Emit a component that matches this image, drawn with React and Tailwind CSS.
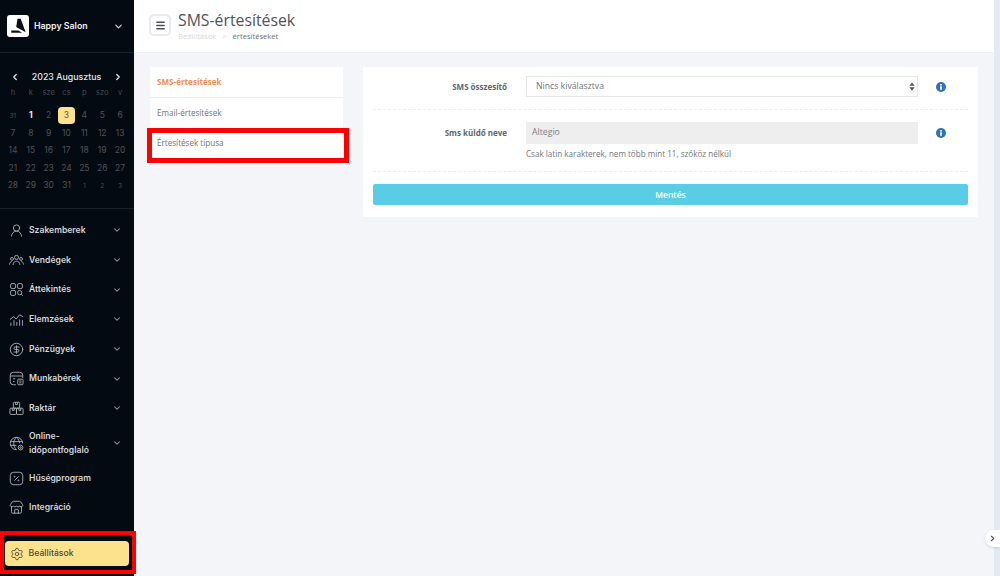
import { ChevronDown, ChevronLeft, ChevronRight, UserRound, CircleDollarSign, Store, Settings, Menu } from "lucide-react";

const Clients = (props) => (
  <svg viewBox="0 0 24 24" fill="none" stroke="currentColor" strokeWidth="1.4" {...props}>
    <circle cx="12" cy="7" r="3.2" />
    <path d="M6.5 19c.4-4 2.6-6 5.5-6s5.100 2 5.500 6" />
    <circle cx="4.800" cy="9.500" r="2.300" />
    <path d="M.8 18.500c.3-3 1.500-4.500 3.700-4.800" />
    <circle cx="19.200" cy="9.500" r="2.300" />
    <path d="M23.200 18.500c-.3-3-1.500-4.500-3.700-4.800" />
  </svg>
);

const Overview = (props) => (
  <svg viewBox="0 0 24 24" fill="none" stroke="currentColor" strokeWidth="1.5" {...props}>
    <rect x="2.500" y="2.500" width="8" height="8" rx="2.500" />
    <rect x="13.500" y="2.500" width="8" height="8" rx="2.500" />
    <rect x="2.500" y="13.500" width="8" height="8" rx="2.500" />
    <circle cx="17" cy="17" r="3.400" />
    <path d="M19.500 19.500 22 22" />
  </svg>
);

const Analytics = (props) => (
  <svg viewBox="0 0 24 24" fill="none" stroke="currentColor" strokeWidth="1.5" {...props}>
    <path d="M1.500 12 7 7.500l4.500 3.500L17 4.500l5.500 3" />
    <path d="M3 22v-5M8 22v-9M12.500 22v-6M17 22v-10M21.500 22v-9" />
  </svg>
);

const Payroll = (props) => (
  <svg viewBox="0 0 24 24" fill="none" stroke="currentColor" strokeWidth="1.500" {...props}>
    <path d="M11 22H7a5 5 0 0 1-5-5V7a5 5 0 0 1 5-5h10a5 5 0 0 1 5 5v4" />
    <path d="M2 8h20M6.500 12.500h3.500M6.500 17h2.500" />
    <rect x="14" y="13" width="8.500" height="9" rx="1.500" />
    <path d="M16.500 16h3.500M16.500 19h3.500" />
  </svg>
);

const Stock = (props) => (
  <svg viewBox="0 0 24 24" fill="none" stroke="currentColor" strokeWidth="1.500" {...props}>
    <rect x="7" y="2" width="10" height="9.500" rx="1.500" />
    <rect x="1.500" y="11.500" width="10.500" height="10" rx="1.500" />
    <rect x="12" y="11.500" width="10.500" height="10" rx="1.500" />
    <path d="M10.500 2v3.500h3V2M5.300 11.500V15h3v-3.500M15.800 11.500V15h3v-3.500" />
  </svg>
);

const OnlineBooking = (props) => (
  <svg viewBox="0 0 24 24" fill="none" stroke="currentColor" strokeWidth="1.400" {...props}>
    <path d="M12 22a10 10 0 1 1 10-10" />
    <path d="M12 2c-6 5.500-6 14.500 0 20M12 2c3.500 3 4.800 7 4.800 9.500M2.500 9h19M2.500 15H12" />
    <circle cx="18.500" cy="18.500" r="3.800" fill="#040a11" />
    <circle cx="18.500" cy="18.500" r="1.300" />
  </svg>
);

const Loyalty = (props) => (
  <svg viewBox="0 0 24 24" fill="none" stroke="currentColor" strokeWidth="1.500" {...props}>
    <rect x="2" y="2" width="20" height="20" rx="5.500" />
    <path d="M15.500 8.500l-7 7" />
    <circle cx="9" cy="9" r=".8" />
    <circle cx="15" cy="15" r=".8" />
  </svg>
);

const days = ["h", "k", "sze", "cs", "p", "szo", "v"];
const weeks = [
  [31, 1, 2, 3, 4, 5, 6],
  [7, 8, 9, 10, 11, 12, 13],
  [14, 15, 16, 17, 18, 19, 20],
  [21, 22, 23, 24, 25, 26, 27],
  [28, 29, 30, 31, 1, 2, 3],
];

const navItems = [
  { label: "Szakemberek", icon: UserRound, arrow: true },
  { label: "Vendégek", icon: Clients, arrow: true },
  { label: "Áttekintés", icon: Overview, arrow: true },
  { label: "Elemzések", icon: Analytics, arrow: true },
  { label: "Pénzügyek", icon: CircleDollarSign, arrow: true },
  { label: "Munkabérek", icon: Payroll, arrow: true },
  { label: "Raktár", icon: Stock, arrow: true },
  { label: "Online-időpontfoglaló", icon: OnlineBooking, arrow: true, tall: true },
  { label: "Hűségprogram", icon: Loyalty },
  { label: "Integráció", icon: Store },
];

const Calendar = () => (
  <div className="px-[4px] pt-[16px] pb-[13px] border-b border-[#1a2028]">
    <div className="flex items-center justify-between pl-[6px] pr-[7px] h-[16px] text-[#e5e7ea]">
      <ChevronLeft size={10} strokeWidth={3} />
      <span className="text-[8.800px] font-medium">2023 Augusztus</span>
      <ChevronRight size={10} strokeWidth={3} />
    </div>
    <div className="grid grid-cols-7 w-[125px] mt-[2px] text-center text-[7.5px] text-[#454a50] h-[20px]">
      {days.map((d) => (
        <span key={d} className="leading-[12px]">{d}</span>
      ))}
    </div>
    <div className="w-[125px]">
      {weeks.map((week, w) => (
        <div key={w} className="grid grid-cols-7 h-[17.5px] items-center text-center text-[8.500px] text-[#4e5359]">
          {week.map((day, i) => {
            const faded = (w === 0 && i === 0) || (w === 4 && i > 3);
            if (w === 0 && day === 3) {
              return (
                <span key={i} className="mx-auto flex items-center justify-center w-[17px] h-[17px] rounded-[4px] bg-[#fce28d] text-[#6b6240]">
                  {day}
                </span>
              );
            }
            if (w === 0 && day === 1) {
              return <span key={i} className="font-bold text-[#e8e9eb]">{day}</span>;
            }
            return (
              <span key={i} className={faded ? "text-[6px]" : ""}>{day}</span>
            );
          })}
        </div>
      ))}
    </div>
  </div>
);

const Sidebar = () => (
  <aside className="relative w-[134px] shrink-0 h-full bg-[#040a11] font-['Inter',sans-serif] flex flex-col">
    <div className="h-[53px] shrink-0 flex items-center pl-[7px] pr-[10px] border-b border-[#1a2028]">
      <div className="w-[22px] h-[22px] rounded-[3px] bg-white flex items-center justify-center">
        <svg viewBox="0 0 20 20" className="w-[18px] h-[18px]">
          <path d="M9.500 2 L13 2 L18.500 17 L8 11 Z" fill="#0a0f15" />
          <path d="M2.500 15h8l4 2.500H2.500z" fill="#0a0f15" />
        </svg>
      </div>
      <span className="ml-[5px] flex-1 text-[8.800px] font-semibold text-[#eef0f2]">Happy Salon</span>
      <ChevronDown size={11} strokeWidth={2.500} className="text-[#d7d9dc]" />
    </div>
    <Calendar />
    <nav className="flex flex-col pt-[7px]">
      {navItems.map((item) => {
        const Icon = item.icon;
        return (
          <div key={item.label} className={`flex items-center pl-[9px] pr-[12px] ${item.tall ? "h-[40px]" : "h-[29.700px]"}`}>
            <Icon width={15} height={15} strokeWidth={1.400} className="shrink-0 text-[#b5b8bc]" />
            <span className={`ml-[5px] flex-1 text-[8.600px] font-semibold text-[#d4d6d9] ${item.tall ? "leading-[14px] pr-[8px]" : ""}`}>
              {item.label}
            </span>
            {item.arrow && <ChevronDown size={10} strokeWidth={2.500} className="text-[#9a9ea3]" />}
          </div>
        );
      })}
    </nav>
    <div className="mt-auto mb-[10px] mx-[5px] h-[25px] rounded-[4px] bg-[#fce28d] flex items-center pl-[5px] text-[#4f4a35]">
      <Settings size={14} strokeWidth={1.500} />
      <span className="ml-[4.500px] text-[8.700px] font-medium">Beállítások</span>
    </div>
    <div className="absolute left-0 bottom-[2px] w-[136px] h-[43px] border-[4px] border-[#ff0000]" />
  </aside>
);

const Tabs = () => (
  <div className="relative w-[193px] shrink-0 self-start bg-white text-[8.100px] text-[#6f747a]">
    <div className="h-[31px] flex items-center px-[7px] font-bold text-[#ef8f53] border-b border-[#eceef2]">SMS-értesítések</div>
    <div className="h-[31px] flex items-center px-[7px]">Email-értesítések</div>
    <div className="h-[31px] flex items-center px-[7px] pb-[2px]">Értesítések típusa</div>
    <div className="absolute left-[-3px] top-[61px] w-[202px] h-[35px] border-[5px] border-[#ff0000]" />
  </div>
);

const InfoDot = () => (
  <svg viewBox="0 0 20 20" className="w-[10px] h-[10px] text-[#2f73b7]">
    <circle cx="10" cy="10" r="10" fill="currentColor" />
    <rect x="8.300" y="8.500" width="3.400" height="7" fill="#fff" />
    <rect x="8.300" y="4.200" width="3.400" height="3" fill="#fff" />
  </svg>
);

const SettingsCard = () => (
  <div className="flex-1 self-start bg-white px-[10px] pt-[9px] pb-[12px] text-[8.700px]">
    <div className="flex items-center pb-[12px] border-b border-dashed border-[#eceef0]">
      <label className="w-[134px] text-right text-[8px] font-bold text-[#62676c]">SMS összesítő</label>
      <div className="ml-[19px] w-[392px] h-[21px] flex items-center justify-between border border-[#e6e8eb] pl-[9px] pr-[2px] text-[#6f747a]">
        <span>Nincs kiválasztva</span>
        <svg viewBox="0 0 8 12" className="w-[6px] h-[9px] text-[#555]" fill="currentColor">
          <path d="M4 .5 7.500 5H.5zM4 11.500.5 7h7z" />
        </svg>
      </div>
      <div className="ml-[18px]"><InfoDot /></div>
    </div>
    <div className="flex items-start pt-[12px] h-[62px] border-b border-dashed border-[#eceef0]">
      <label className="w-[134px] text-right text-[8px] font-bold text-[#62676c] mt-[5px]">Sms küldő neve</label>
      <div className="ml-[19px] w-[392px]">
        <div className="h-[22px] bg-[#eeeeee] flex items-center px-[6px] text-[#7b8085]">Altegio</div>
        <p className="mt-[4px] text-[8.100px] text-[#72777c]">Csak latin karakterek, nem több mint 11, szóköz nélkül</p>
      </div>
      <div className="ml-[18px] mt-[6px]"><InfoDot /></div>
    </div>
    <button className="block mt-[12px] w-full h-[21px] pt-[1px] rounded-[2px] bg-[#59cde6] text-white text-[8.500px] font-semibold">Mentés</button>
  </div>
);

export default function App() {
  return (
    <div className="relative flex w-[1000px] h-[576px] overflow-hidden bg-[#f3f5f9]">
      <Sidebar />
      <main className="flex-1 flex flex-col font-['Open_Sans',sans-serif]">
        <header className="h-[53px] shrink-0 bg-white flex items-center pl-[15px] border-b border-[#eef0f4]">
          <div className="w-[22px] h-[22px] mb-[2px] border-2 border-[#e8eaee] rounded-[5px] flex items-center justify-center text-[#4a4f55]">
            <Menu size={11} strokeWidth={3} />
          </div>
          <div className="ml-[7px] pb-[1px]">
            <h1 className="text-[15.800px] leading-[22px] text-[#4f5459]">SMS-értesítések</h1>
            <div className="flex items-center text-[7.600px] leading-[11px] text-[#d6d9de]">
              Beállítások
              <span className="mx-[6px]">&gt;</span>
              <span className="text-[#6e7378]">értesítéseket</span>
            </div>
          </div>
        </header>
        <div className="flex gap-[20px] px-[16px] pt-[14px]">
          <Tabs />
          <SettingsCard />
        </div>
      </main>
      <div className="w-[6px] shrink-0 bg-[#e4e9f3]" />
      <div className="absolute right-0 top-[530px] w-[15px] h-[17px] rounded-l-full bg-white shadow-sm flex items-center justify-start pl-[3px] text-[#555]">
        <ChevronRight size={9} strokeWidth={3} />
      </div>
    </div>
  );
}
